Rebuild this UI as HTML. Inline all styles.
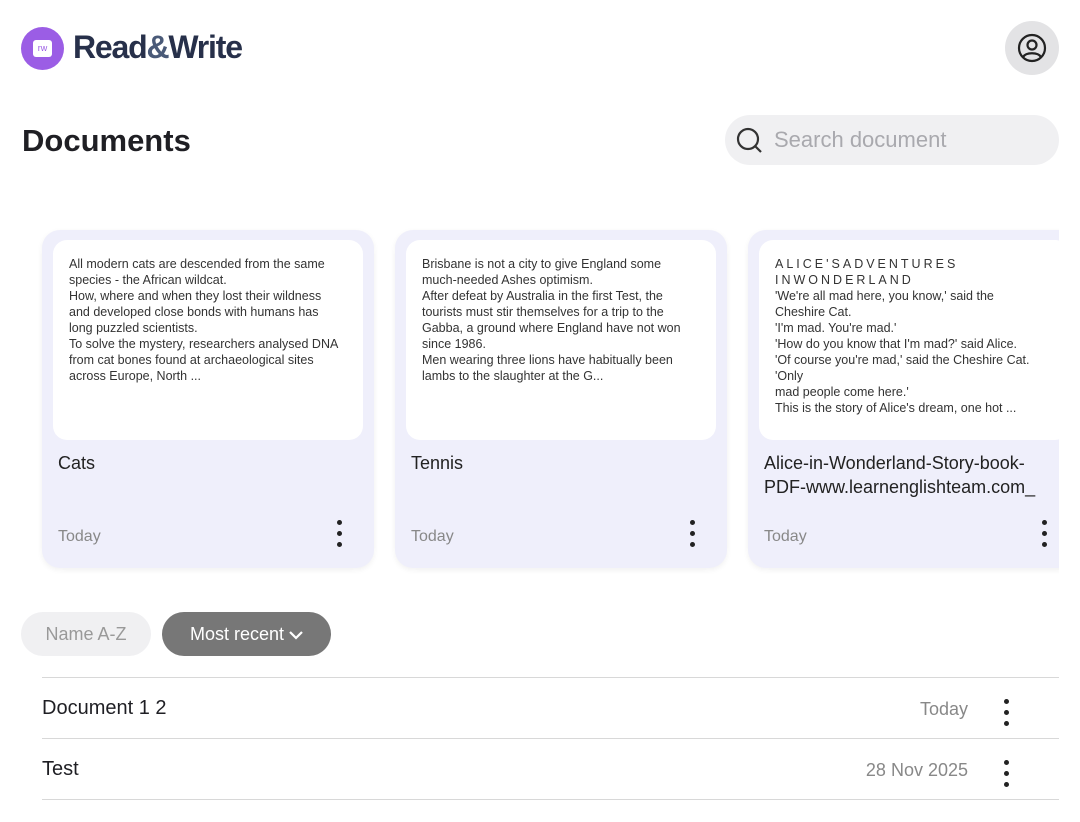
<!DOCTYPE html>
<html><head><style>
*{box-sizing:border-box;margin:0;padding:0}
body{width:1080px;height:822px;background:#fff;font-family:"Liberation Sans",sans-serif;color:#1f1f24;position:relative;overflow:hidden}
.abs{position:absolute}
.logo{left:21px;top:27px;width:43px;height:43px;border-radius:50%;background:#9b5de5}
.brand{left:73px;top:29px;font-size:32px;color:#27304a;letter-spacing:-1.2px;font-weight:bold}
.prof{left:1005px;top:21px;width:54px;height:54px;border-radius:50%;background:#e3e3e5}
h1{position:absolute;left:22px;top:123px;font-size:31px;font-weight:bold}
.search{left:725px;top:115px;width:334px;height:50px;border-radius:25px;background:#f0f0f2;color:#a9a9ae;font-size:22px;padding:12px 0 0 49px}
.strip{left:30px;top:222px;width:1029px;height:356px;overflow:hidden}
.card{position:absolute;top:8px;width:332px;height:338px;border-radius:18px;background:#efeffb;box-shadow:0 2px 6px rgba(0,0,0,.06)}
.inner{position:absolute;left:11px;top:10px;width:310px;height:200px;background:#fff;border-radius:14px;padding:16px 24px 16px 16px;font-size:12.5px;line-height:16px;color:#333}
.title{position:absolute;left:16px;top:221px;font-size:18px;line-height:24px;color:#222;white-space:nowrap}
.date{position:absolute;left:16px;top:298px;font-size:16px;color:#888}
.dots{position:absolute;right:32px;top:290px;width:5px}
.dots i{display:block;width:5px;height:5px;border-radius:50%;background:#222;margin-bottom:6px}
.pill{top:612px;height:44px;border-radius:22px;font-size:18px;padding-top:12px;text-align:center}
.row{left:42px;width:1017px;height:61px;border-top:1px solid #d8d8d8;font-size:20px;padding-top:19px}
.row .d{position:absolute;right:91px;top:21px;color:#888;font-size:18px}
.row .dots{right:50px;top:21px}
</style></head><body>
<div class="abs logo"><span style="position:absolute;left:12px;top:13px;width:19px;height:17px;background:#fff;border-radius:3px;font-size:9px;color:#9b5de5;text-align:center;line-height:17px">rw</span></div>
<div class="abs brand">Read<span style="color:#4a5a78">&amp;</span>Write</div>
<div class="abs prof"><svg width="54" height="54" viewBox="0 0 54 54"><circle cx="27" cy="27" r="13" fill="none" stroke="#222" stroke-width="2.2"/><circle cx="27" cy="24" r="4.5" fill="none" stroke="#222" stroke-width="2.2"/><path d="M18 36c3-5 15-5 18 0" fill="none" stroke="#222" stroke-width="2.2"/></svg></div>
<h1>Documents</h1>
<div class="abs search"><svg class="abs" style="left:10px;top:11px" width="28" height="28" viewBox="0 0 28 28"><circle cx="13" cy="13" r="10" fill="none" stroke="#333" stroke-width="2.2"/><path d="M20 20l6 6" stroke="#333" stroke-width="2.2"/></svg>Search document</div>
<div class="abs strip">
<div class="card" style="left:12px"><div class="inner">All modern cats are descended from the same species - the African wildcat.<br>How, where and when they lost their wildness and developed close bonds with humans has long puzzled scientists.<br>To solve the mystery, researchers analysed DNA from cat bones found at archaeological sites across Europe, North ...</div><div class="title">Cats</div><div class="date">Today</div><div class="dots"><i></i><i></i><i></i></div></div>
<div class="card" style="left:365px"><div class="inner">Brisbane is not a city to give England some much-needed Ashes optimism.<br>After defeat by Australia in the first Test, the tourists must stir themselves for a trip to the Gabba, a ground where England have not won since 1986.<br>Men wearing three lions have habitually been lambs to the slaughter at the G...</div><div class="title">Tennis</div><div class="date">Today</div><div class="dots"><i></i><i></i><i></i></div></div>
<div class="card" style="left:718px"><div class="inner"><span style="letter-spacing:3px">ALICE'SADVENTURES INWONDERLAND</span><br>'We're all mad here, you know,' said the Cheshire Cat.<br>'I'm mad. You're mad.'<br>'How do you know that I'm mad?' said Alice.<br>'Of course you're mad,' said the Cheshire Cat. 'Only<br>mad people come here.'<br>This is the story of Alice's dream, one hot ...</div><div class="title">Alice-in-Wonderland-Story-book-<br>PDF-www.learnenglishteam.com_</div><div class="date">Today</div><div class="dots" style="right:auto;left:294px"><i></i><i></i><i></i></div></div>
</div>
<div class="abs pill" style="left:21px;width:130px;background:#f0f0f2;color:#999">Name A-Z</div>
<div class="abs pill" style="left:162px;width:169px;background:#777;color:#fff">Most recent <svg width="14" height="10" viewBox="0 0 14 10"><path d="M1 2l6 6 6-6" fill="none" stroke="#fff" stroke-width="2.2"/></svg></div>
<div class="abs row" style="top:677px">Document 1 2<span class="d">Today</span><div class="dots"><i></i><i></i><i></i></div></div>
<div class="abs row" style="top:738px">Test<span class="d">28 Nov 2025</span><div class="dots"><i></i><i></i><i></i></div></div>
<div class="abs" style="left:42px;top:799px;width:1017px;border-top:1px solid #d8d8d8"></div>
</body></html>
